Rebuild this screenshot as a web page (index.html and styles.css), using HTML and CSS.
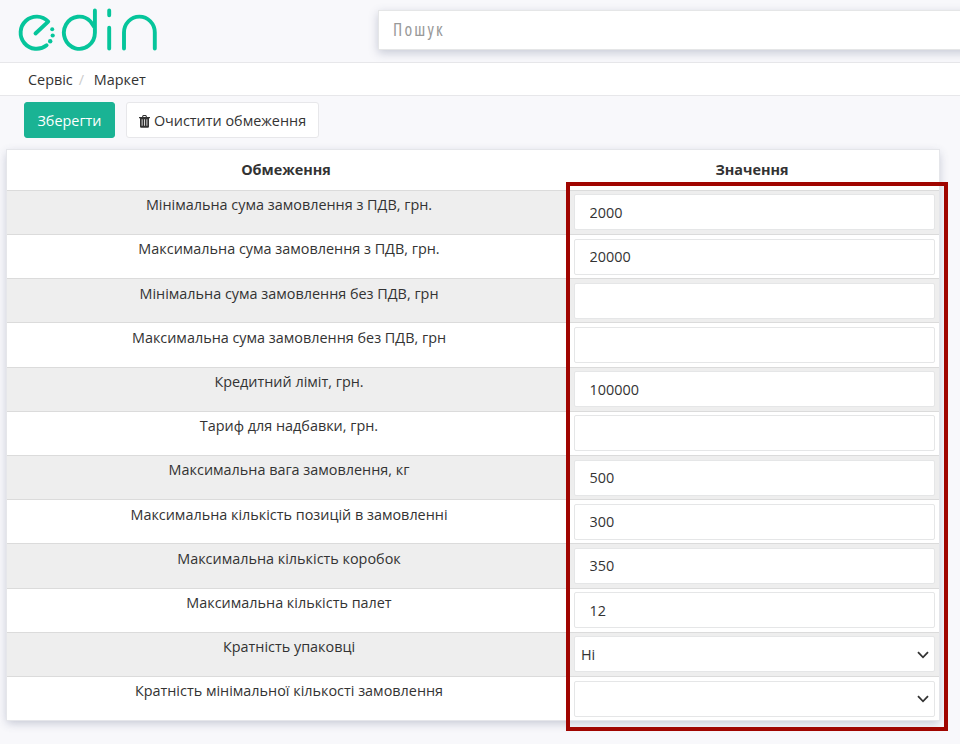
FILE: index.html
```html
<!DOCTYPE html>
<html lang="uk">
<head>
<meta charset="utf-8">
<title>Маркет</title>
<link rel="stylesheet" href="styles.css">
</head>
<body>
<header class="topbar">
  <svg class="logo" width="146" height="46" viewBox="0 0 146 46" fill="none" stroke="#06c59b" stroke-width="3.900" stroke-linecap="round" stroke-linejoin="round">
    <path d="M21.500 27.500 34.200 15.600A16 16.100 0 1 0 32.600 39.300"/>
    <path d="M80.900 4.500V26.800A15.500 16.100 0 1 1 76.500 15.500L80.900 22M95.200 4.500V9.200M95.200 21.800V42.600M110 42.600V26.500A15.400 15.900 0 0 1 140.800 26.500V42.600"/>
    <g fill="#06c59b" stroke="none"><circle cx="38.200" cy="23.300" r="2"/><circle cx="38.700" cy="29.500" r="2.100"/><circle cx="36.200" cy="35.200" r="2.200"/></g>
  </svg>
  <input class="search" type="text" placeholder="Пошук">
</header>
<nav class="crumbs"><span>Сервіс</span><span class="slash">/</span><span>Маркет</span></nav>
<div class="actions">
  <button class="btn primary">Зберегти</button>
  <button class="btn"><svg width="11" height="13" viewBox="0 0 11 13"><path fill="#333" fill-rule="evenodd" d="M0 2H3L3.700.3Q3.900 0 4.300 0H6.700Q7.100 0 7.300.3L8 2H11V3.300H10V11.500Q10 12.700 8.800 12.700H2.200Q1 12.700 1 11.500V3.300H0ZM4.100 2H6.900L6.500 1.100H4.500ZM2.700 4.300V10.700H3.500V4.300ZM5.100 4.300V10.700H5.900V4.300ZM7.500 4.300V10.700H8.300V4.300Z"/></svg>Очистити обмеження</button>
</div>
<main class="panel">
  <div class="head"><div>Обмеження</div><div>Значення</div></div>
  <div class="row"><div class="name">Мінімальна сума замовлення з ПДВ, грн.</div><input class="field" value="2000"></div>
  <div class="row"><div class="name">Максимальна сума замовлення з ПДВ, грн.</div><input class="field" value="20000"></div>
  <div class="row"><div class="name">Мінімальна сума замовлення без ПДВ, грн</div><input class="field"></div>
  <div class="row"><div class="name">Максимальна сума замовлення без ПДВ, грн</div><input class="field"></div>
  <div class="row"><div class="name">Кредитний ліміт, грн.</div><input class="field" value="100000"></div>
  <div class="row"><div class="name">Тариф для надбавки, грн.</div><input class="field"></div>
  <div class="row"><div class="name">Максимальна вага замовлення, кг</div><input class="field" value="500"></div>
  <div class="row"><div class="name">Максимальна кількість позицій в замовленні</div><input class="field" value="300"></div>
  <div class="row"><div class="name">Максимальна кількість коробок</div><input class="field" value="350"></div>
  <div class="row"><div class="name">Максимальна кількість палет</div><input class="field" value="12"></div>
  <div class="row"><div class="name">Кратність упаковці</div><div class="field select"><span>Ні</span><svg width="12" height="8" viewBox="0 0 12 8"><path d="M1 1.200 6 6.300 11 1.200" fill="none" stroke="#333" stroke-width="1.800"/></svg></div></div>
  <div class="row"><div class="name">Кратність мінімальної кількості замовлення</div><div class="field select"><span></span><svg width="12" height="8" viewBox="0 0 12 8"><path d="M1 1.200 6 6.300 11 1.200" fill="none" stroke="#333" stroke-width="1.800"/></svg></div></div>
  <div class="highlight"></div>
</main>
</body>
</html>
```
FILE: styles.css
```css
* { box-sizing: border-box; }
html, body { overflow: hidden; }
body { margin: 0; height: 744px; background: #f8f8fb; color: #333; font: 14.4px/20px "Open Sans", "Noto Sans", sans-serif; }
.topbar { height: 62px; display: flex; align-items: flex-start; padding-left: 14px; }
.logo { flex: none; margin-top: 6px; }
.search { flex: none; width: 620px; height: 40px; margin: 10px 0 0 218px; padding: 0 14px 3px; border: 1px solid #e5e6e7; background: #fff; outline: 0; box-shadow: 0 3px 9px rgba(70, 80, 120, .27); font: 17.5px "Open Sans", "Noto Sans", sans-serif; font-stretch: 75%; letter-spacing: 2.2px; }
.search::placeholder { color: #999; }
.crumbs { height: 34px; background: #fff; border: solid #e7e7ea; border-width: 1px 0; padding: 7px 28px 0; display: flex; }
.slash { color: #ccc; width: 21px; padding-left: 6px; }
.actions { display: flex; gap: 11px; padding: 6px 24px 0; height: 54px; }
.btn { height: 36px; border: 1px solid #e7e7ea; border-radius: 3px; background: #fff; color: #333; font: inherit; width: 193px; padding: 2px 0 0; display: flex; align-items: center; justify-content: center; gap: 4px; white-space: nowrap; }
.primary { width: 91px; background: #1ab394; border-color: #1ab394; color: #fff; }
.panel { position: relative; width: 932px; height: 570px; margin-left: 7px; background: #fff; box-shadow: 0 0 0 1px #e5e6ea, 0 3px 9px rgba(70, 80, 120, .3); }
.head { height: 39.85px; display: grid; grid-template-columns: 558px 374px; text-align: center; font-weight: 700; padding-top: 10px; }
.row { height: 44.19px; display: grid; grid-template-columns: 567px 361px; align-items: start; border-top: 1px solid #dbdbdb; }
.row:nth-child(even) { background: #eee; }
.name { text-align: center; padding: 4.35px 3px 0 0; }
.field { width: 361px; height: 36px; margin-top: 3.6px; border: 1px solid #e5e6e7; border-radius: 2px; background: #fff; padding: 0 14.5px; color: #333; font: inherit; outline: 0; }
.select { display: flex; align-items: center; justify-content: space-between; padding: 1px 5px 0 6px; }
.highlight { position: absolute; left: 559px; top: 32px; width: 382px; height: 549px; border: 4px solid #a00500; pointer-events: none; }
```
